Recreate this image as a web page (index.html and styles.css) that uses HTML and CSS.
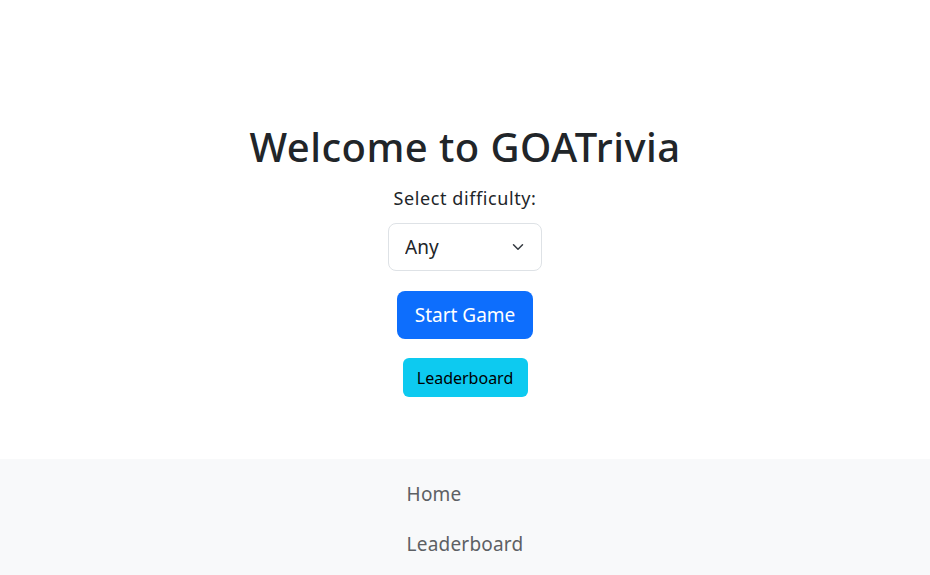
FILE: index.html
```html
<!DOCTYPE html>
<html lang="en">
<head>
<meta charset="utf-8">
<title>GOATrivia</title>
<link rel="stylesheet" href="styles.css">
</head>
<body>
<main class="home">
  <h1 class="title">Welcome to GOATrivia</h1>
  <label class="label" for="difficulty">Select difficulty:</label>
  <div class="select-wrap">
    <select id="difficulty" class="select">
      <option>Any</option>
      <option>Easy</option>
      <option>Medium</option>
      <option>Hard</option>
    </select>
    <svg class="chevron" viewBox="0 0 16 16" width="12" height="12"><path d="m2 5 6 6 6-6" fill="none" stroke="#343a40" stroke-width="2" stroke-linecap="round" stroke-linejoin="round"/></svg>
  </div>
  <button class="btn btn-primary">Start Game</button>
  <button class="btn btn-info">Leaderboard</button>
</main>
<footer class="footer">
  <ul class="nav">
    <li><a class="nav-link" href="#">Home</a></li>
    <li><a class="nav-link" href="#">Leaderboard</a></li>
  </ul>
</footer>
</body>
</html>
```

FILE: styles.css
```css
html, body {
  margin: 0;
  padding: 0;
  background: #fff;
}
body {
  font-family: "Noto Sans", "Open Sans", sans-serif;
  color: #212529;
  font-size: 16px;
  line-height: 1.5;
}
.home {
  display: flex;
  flex-direction: column;
  align-items: center;
  padding-top: 123px;
  height: 336px;
}
.title {
  margin: 0 0 15px;
  font-size: 40px;
  line-height: 48px;
  font-weight: 500;
  letter-spacing: 0.45px;
}
.label {
  font-size: 18px;
  line-height: 24px;
  margin-bottom: 13px;
  letter-spacing: 0.6px;
  color: #212529;
}
.select-wrap {
  position: relative;
  width: 154px;
}
.select {
  appearance: none;
  -webkit-appearance: none;
  width: 154px;
  height: 48px;
  box-sizing: border-box;
  border: 1px solid #dee2e6;
  border-radius: 8px;
  background: #fff;
  color: #212529;
  font-family: inherit;
  font-size: 19px;
  padding: 0 16px;
  margin: 0;
}
.chevron {
  position: absolute;
  right: 18px;
  top: 18px;
  pointer-events: none;
}
.btn {
  font-family: inherit;
  border: 1px solid transparent;
  cursor: pointer;
  margin: 0;
}
.btn-primary {
  margin-top: 20px;
  background: #0d6efd;
  color: #fff;
  font-size: 19px;
  height: 48px;
  width: 136px;
  border-radius: 8px;
  padding: 0;
}
.btn-info {
  margin-top: 19px;
  background: #0dcaf0;
  color: #000;
  font-size: 16px;
  height: 39px;
  width: 125px;
  border-radius: 6px;
  padding: 0;
}
.footer {
  background: #f8f9fa;
  height: 116px;
  padding-top: 10px;
  box-sizing: border-box;
  display: flex;
  justify-content: center;
}
.nav {
  list-style: none;
  margin: 0;
  padding: 0;
  display: flex;
  flex-direction: column;
}
.nav-link {
  display: block;
  padding: 10px 16px;
  font-size: 19px;
  line-height: 30px;
  letter-spacing: 0.2px;
  color: #5d6064;
  text-decoration: none;
}
```
